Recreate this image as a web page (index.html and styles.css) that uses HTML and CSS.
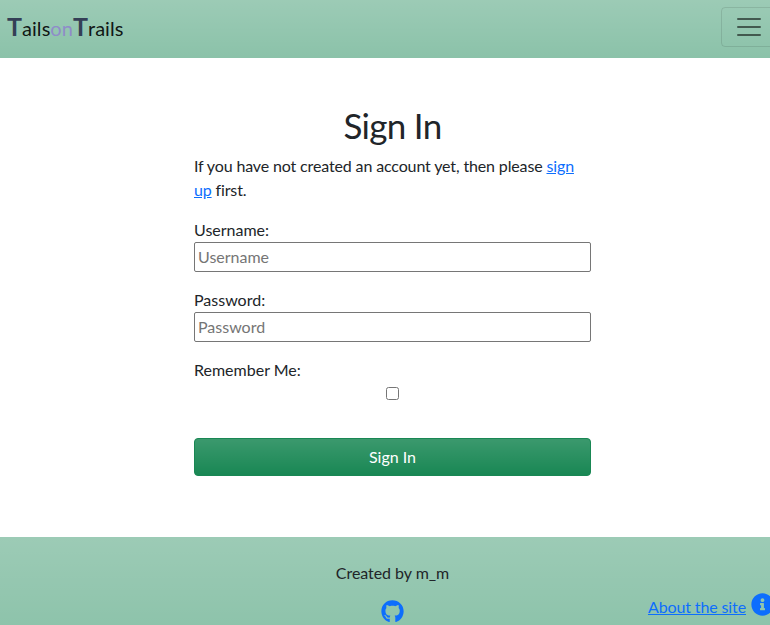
FILE: index.html
```html
<!DOCTYPE html>
<html lang="en">
<head>
<meta charset="utf-8">
<title>Tails on Trails - Sign In</title>
<link rel="stylesheet" href="styles.css">
</head>
<body>
<header class="navbar">
  <a class="brand"><span class="cap">T</span>ails<span class="on">on</span><span class="cap">T</span>rails</a>
  <button class="toggler" type="button" aria-label="Toggle navigation">
    <svg viewBox="0 0 30 30" width="30" height="30"><path stroke="rgba(0,0,0,.55)" stroke-linecap="round" stroke-miterlimit="10" stroke-width="2" d="M4 7h22M4 15h22M4 23h22"/></svg>
  </button>
</header>
<main class="content">
  <h1>Sign In</h1>
  <p class="intro">If you have not created an account yet, then please <a href="#">sign up</a> first.</p>
  <form>
    <div class="field"><label for="user">Username:</label><input id="user" type="text" placeholder="Username"></div>
    <div class="field"><label for="pass">Password:</label><input id="pass" type="password" placeholder="Password"></div>
    <div class="field"><label for="remember">Remember Me:</label><input id="remember" class="check" type="checkbox"></div>
    <button class="submit" type="button">Sign In</button>
  </form>
</main>
<footer class="footer">
  <p>Created by m_m</p>
  <div class="links">
    <a class="github" href="#" aria-label="GitHub"><svg viewBox="0 0 496 512" width="23" height="23"><path fill="currentColor" d="M165.900 397.400c0 2-2.300 3.600-5.200 3.600-3.300.3-5.600-1.300-5.600-3.600 0-2 2.300-3.600 5.200-3.600 3-.3 5.600 1.300 5.600 3.600zm-31.100-4.500c-.7 2 1.300 4.300 4.300 4.900 2.600 1 5.600 0 6.200-2s-1.300-4.300-4.300-5.200c-2.600-.7-5.500.3-6.200 2.300zm44.200-1.700c-2.900.7-4.900 2.600-4.600 4.900.3 2 2.900 3.300 5.900 2.600 2.900-.7 4.900-2.600 4.600-4.600-.3-1.900-3-3.200-5.900-2.900zM244.800 8C106.100 8 0 113.300 0 252c0 110.900 69.800 205.800 169.500 239.200 12.800 2.300 17.300-5.600 17.300-12.100 0-6.200-.3-40.400-.3-61.400 0 0-70 15-84.700-29.800 0 0-11.400-29.100-27.800-36.600 0 0-22.900-15.700 1.600-15.400 0 0 24.900 2 38.600 25.800 21.900 38.600 58.600 27.500 72.900 20.900 2.300-16 8.800-27.100 16-33.700-55.900-6.200-112.300-14.300-112.300-110.500 0-27.500 7.600-41.300 23.600-58.900-2.600-6.500-11.100-33.300 2.600-67.900 20.900-6.500 69 27 69 27 20-5.600 41.500-8.500 62.800-8.500s42.800 2.900 62.800 8.500c0 0 48.100-33.600 69-27 13.700 34.700 5.200 61.400 2.600 67.900 16 17.700 25.800 31.500 25.800 58.900 0 96.500-58.900 104.200-114.800 110.500 9.200 7.900 17 22.900 17 46.400 0 33.700-.3 75.400-.3 83.600 0 6.500 4.600 14.400 17.300 12.100C428.200 457.800 496 362.900 496 252 496 113.300 383.500 8 244.800 8z"/></svg></a>
    <a class="about" href="#"><span>About the site</span><svg viewBox="0 0 512 512" width="23" height="23"><path fill="currentColor" fill-rule="evenodd" d="M256 8C119 8 8 119 8 256s111 248 248 248 248-111 248-248S393 8 256 8zm0 110c23.200 0 42 18.800 42 42s-18.800 42-42 42-42-18.800-42-42 18.800-42 42-42zm56 254c0 6.600-5.400 12-12 12h-88c-6.600 0-12-5.400-12-12v-24c0-6.600 5.400-12 12-12h12v-64h-12c-6.600 0-12-5.400-12-12v-24c0-6.600 5.400-12 12-12h64c6.600 0 12 5.400 12 12v100h12c6.600 0 12 5.400 12 12v24z"/></svg></a>
  </div>
</footer>
</body>
</html>
```
FILE: styles.css
```css
* { box-sizing: border-box; }
html { overflow: hidden; }
body {
  margin: 0;
  width: 785px;
  height: 625px;
  overflow: hidden;
  font: 16px/24px Lato, sans-serif;
  color: #212529;
  background: #fff;
}
a { color: #0d6efd; }
.navbar {
  display: flex;
  justify-content: space-between;
  height: 58px;
  padding: 7px 8px 0 7px;
  background: #8bc2a9 linear-gradient(180deg, rgba(255,255,255,.15), rgba(255,255,255,0));
}
.brand {
  padding-top: 6px;
  font-size: 20px;
  line-height: 30px;
  letter-spacing: .04px;
  color: rgba(0,0,0,.9);
}
.cap { font-size: 25px; font-weight: 700; line-height: 1; color: #343f56; }
.on { color: #8f8cc9; }
.toggler {
  width: 56px;
  height: 40px;
  padding: 4px 12px;
  border: 1px solid rgba(0,0,0,.1);
  border-radius: 4px;
  background: none;
}
.toggler svg { display: block; }
.content { width: 397px; height: 479px; margin: 0 auto; padding-top: 47px; }
h1 {
  margin: 0 0 8px;
  font-size: 35px;
  font-weight: 400;
  line-height: 41px;
  letter-spacing: -.7px;
  text-align: center;
}
.intro { margin: 0 0 16px; letter-spacing: -.14px; }
.field { margin-bottom: 16px; }
.field label { display: block; }
.field input { display: block; }
.field input:not(.check) {
  width: 100%;
  height: 30px;
  padding: 0 2px 2px 3px;
  border: 1px solid #767676;
  border-radius: 2px;
  font: inherit;
}
input::placeholder { color: #757575; }
.field .check { width: 13px; height: 13px; margin: 5px auto 38px; }
.submit {
  display: block;
  width: 100%;
  height: 38px;
  padding: 6px 12px;
  border: 1px solid #198754;
  border-radius: 4px;
  font: inherit;
  color: #fff;
  background: #198754 linear-gradient(180deg, rgba(255,255,255,.15), rgba(255,255,255,0));
}
.footer {
  height: 104px;
  padding-top: 24px;
  text-align: center;
  background: #8bc2a9 linear-gradient(180deg, rgba(255,255,255,.15), rgba(255,255,255,0));
}
.footer p { margin: 0; letter-spacing: -.05px; }
.links { display: grid; grid-template-columns: 1fr auto 1fr; padding-top: 7px; }
.links svg { display: block; }
.github { grid-column: 2; padding-top: 8px; }
.about { display: flex; gap: 5px; justify-self: end; padding-right: 11px; text-decoration: none; }
.about svg { margin-top: 1px; }
.about span { padding-top: 3px; letter-spacing: -.12px; text-decoration: underline; }
```
